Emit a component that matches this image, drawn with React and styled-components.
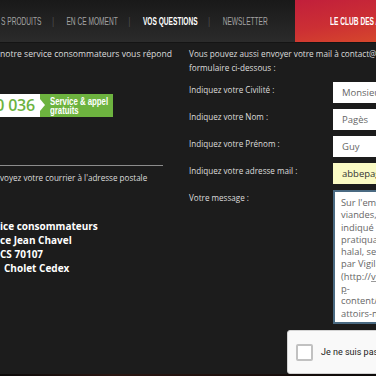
import React from 'react';
import styled, { createGlobalStyle } from 'styled-components';

const Global = createGlobalStyle`
  html, body { margin: 0; padding: 0; background: #1c1c1c; overflow: hidden; }
  body { font-family: "Open Sans", "Liberation Sans", sans-serif; }
`;

const Page = styled.div`
  width: 376px;
  height: 376px;
  overflow: hidden;
  display: flex;
  flex-direction: column;
  background: #1c1c1c;
`;

const Header = styled.header`
  height: 42px;
  flex: none;
  display: flex;
  align-items: stretch;
  background: linear-gradient(#191919, #2b2b2b);
  border-bottom: 1px solid #141414;
`;

const Nav = styled.nav`
  flex: 1;
  min-width: 0;
  display: flex;
  align-items: center;
`;

/* condensed display type: Arial metrics squeezed horizontally */
const NavList = styled.div`
  display: flex;
  align-items: center;
  transform: scaleX(0.6);
  transform-origin: left center;
  white-space: nowrap;
  margin-left: 1px;
`;

const NavItem = styled.span`
  font-family: "Liberation Sans", Arial, sans-serif;
  font-size: 11px;
  white-space: nowrap;
  color: ${p => (p.$active ? '#ffffff' : '#a3a3a3')};
  font-weight: ${p => (p.$active ? 700 : 400)};
`;

const Sep = styled.span`
  color: #5a5a5a;
  font-family: "Liberation Sans", Arial, sans-serif;
  font-size: 11px;
  margin: 0 21px 0 18px;
`;

const Club = styled.div`
  flex: none;
  width: 81px;
  overflow: hidden;
  display: flex;
  align-items: center;
  padding-left: 35px;
  box-sizing: border-box;
  background: linear-gradient(170deg, #c11f3b 0%, #cc2f34 55%, #d6472c 100%);
`;

const Squeeze = styled.span`
  display: inline-block;
  white-space: nowrap;
  transform: scaleX(${p => p.$s});
  transform-origin: left center;
`;

const ClubText = styled(Squeeze)`
  color: #fff;
  font-family: "Liberation Sans", Arial, sans-serif;
  font-weight: 700;
  font-size: 11px;
`;

const Main = styled.main`
  display: flex;
  align-items: flex-start;
  padding-top: 4px;
  flex: none;
`;

const LeftCol = styled.section`
  width: 170px;
  flex: none;
  display: flex;
  flex-direction: column;
`;

const Text = styled.p`
  margin: 0;
  font-size: ${p => p.$size || 8.6}px;
  line-height: 14px;
  color: #dcdcdc;
  white-space: nowrap;
`;

const Badge = styled.div`
  display: flex;
  height: 23px;
  margin-top: 33px;
`;

const Phone = styled.div`
  position: relative;
  width: 40px;
  background: #fff;
  &::after {
    content: "";
    position: absolute;
    right: -5px;
    top: 5px;
    border-left: 5px solid #fff;
    border-top: 6px solid transparent;
    border-bottom: 6px solid transparent;
  }
`;

const PhoneClip = styled.div`
  width: 35px;
  height: 100%;
  overflow: hidden;
  display: flex;
  justify-content: flex-end;
  align-items: center;
`;

const Digits = styled.span`
  flex: none;
  white-space: nowrap;
  color: #6db33f;
  font-family: "Open Sans", sans-serif;
  font-size: 16px;
  font-weight: 600;
  letter-spacing: -0.2px;
  line-height: 23px;
`;

const Free = styled.div`
  width: 73px;
  background: #6db33f;
  box-sizing: border-box;
  padding: 3px 0 0 10px;
  display: flex;
  flex-direction: column;
  overflow: hidden;
`;

const FreeLine = styled(Squeeze)`
  color: #fff;
  font-family: "Liberation Sans", Arial, sans-serif;
  font-weight: 700;
  font-size: 10px;
  line-height: 9px;
`;

const Rule = styled.hr`
  width: 163px;
  margin: 48px 0 0 0;
  border: none;
  border-top: 1px solid #8c8c8c;
  height: 0;
`;

const Postal = styled(Text)`
  margin-top: 5px;
`;

const Address = styled.div`
  margin-top: 34px;
  display: flex;
  flex-direction: column;
`;

const AddrLine = styled.span`
  font-size: 10px;
  font-weight: 700;
  line-height: 14px;
  color: #ffffff;
  white-space: nowrap;
  padding-left: ${p => p.$indent || 0}px;
`;

const RightCol = styled.section`
  margin-left: 19px;
  flex: none;
  width: 320px;
  display: flex;
  flex-direction: column;
`;

const Form = styled.form`
  margin-top: 7px;
  display: grid;
  grid-template-columns: 144px 176px;
  row-gap: 6px;
`;

const Label = styled.label`
  font-size: 8.1px;
  line-height: 14px;
  color: #dcdcdc;
  padding-top: 1px;
  white-space: nowrap;
`;

const Input = styled.div`
  height: 21px;
  background: ${p => (p.$autofill ? '#fafac4' : '#ffffff')};
  color: ${p => (p.$autofill ? '#333' : '#666')};
  font-size: 9.5px;
  line-height: 21px;
  padding-left: 9px;
  white-space: nowrap;
  overflow: hidden;
`;

const TextArea = styled.div`
  height: 134px;
  box-sizing: border-box;
  background: #fff;
  border: 2px solid #4a6a82;
  padding: 5px 0 0 6px;
  font-size: 9.3px;
  line-height: 12.3px;
  color: #666;
  overflow: hidden;
  display: flex;
  flex-direction: column;
`;

const TLine = styled.span`
  white-space: nowrap;
`;

const Spell = styled.span`
  text-decoration: underline;
  text-decoration-color: #999;
`;

const Captcha = styled.div`
  margin: 6px 0 0 98px;
  height: 44px;
  width: 200px;
  box-sizing: border-box;
  background: #f9f9f9;
  border: 1px solid #d3d3d3;
  border-radius: 3px;
  display: flex;
  align-items: center;
  padding-left: 8px;
  gap: 8px;
  font-family: Roboto, "Liberation Sans", sans-serif;
  font-size: 9px;
  color: #222;
`;

const Check = styled.span`
  width: 17px;
  height: 17px;
  box-sizing: border-box;
  border: 2px solid #c1c1c1;
  border-radius: 2px;
  background: #fff;
  flex: none;
`;

const Footer = styled.footer`
  height: 20px;
  flex: none;
  background: linear-gradient(90deg, #0c0a09, #2a1612 30%, #1e100d 60%, #0d0b0a);
`;

export default function App() {
  return (
    <Page>
      <Global />
      <Header>
        <Nav>
          <NavList>
            <NavItem>S PRODUITS</NavItem>
            <Sep>|</Sep>
            <NavItem>EN CE MOMENT</NavItem>
            <Sep>|</Sep>
            <NavItem $active>VOS QUESTIONS</NavItem>
            <Sep>|</Sep>
            <NavItem>NEWSLETTER</NavItem>
          </NavList>
        </Nav>
        <Club><ClubText $s={0.6}>LE CLUB DES AMIS</ClubText></Club>
      </Header>
      <Main>
        <LeftCol>
          <Text>notre service consommateurs vous répond</Text>
          <Badge>
            <Phone><PhoneClip><Digits>00 036</Digits></PhoneClip></Phone>
            <Free>
              <FreeLine $s={0.78}>Service &amp; appel</FreeLine>
              <FreeLine $s={0.78}>gratuits</FreeLine>
            </Free>
          </Badge>
          <Rule />
          <Postal $size={8.1}>voyez votre courrier à l'adresse postale</Postal>
          <Address>
            <AddrLine>ice consommateurs</AddrLine>
            <AddrLine>ce Jean Chavel</AddrLine>
            <AddrLine>CS 70107</AddrLine>
            <AddrLine $indent={4}>Cholet Cedex</AddrLine>
          </Address>
        </LeftCol>
        <RightCol>
          <Text $size={8.2}>Vous pouvez aussi envoyer votre mail à contact@<br />formulaire ci-dessous :</Text>
          <Form>
            <Label>Indiquez votre Civilité :</Label>
            <Input>Monsieur</Input>
            <Label>Indiquez votre Nom :</Label>
            <Input>Pagès</Input>
            <Label>Indiquez votre Prénom :</Label>
            <Input>Guy</Input>
            <Label>Indiquez votre adresse mail :</Label>
            <Input $autofill>abbepages</Input>
            <Label>Votre message :</Label>
            <TextArea>
              <TLine>Sur l'emballage</TLine>
              <TLine>viandes,</TLine>
              <TLine>indiqué en</TLine>
              <TLine>pratiquant</TLine>
              <TLine>halal, selon</TLine>
              <TLine>par Vigilance</TLine>
              <TLine>(http://<Spell>vigilance</Spell></TLine>
              <TLine><Spell>p</Spell>-</TLine>
              <TLine>content/</TLine>
              <TLine>attoirs-n</TLine>
            </TextArea>
          </Form>
          <Captcha>
            <Check />
            <span>Je ne suis pas un robot</span>
          </Captcha>
        </RightCol>
      </Main>
      <Footer />
    </Page>
  );
}
